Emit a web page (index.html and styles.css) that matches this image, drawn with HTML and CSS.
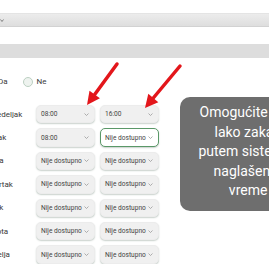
FILE: index.html
```html
<!DOCTYPE html>
<html lang="sr">
<head>
    <meta charset="UTF-8">
    <meta name="viewport" content="width=device-width, initial-scale=1.0">
    <title>Radno vreme</title>
    <link rel="stylesheet" href="styles.css">
</head>
<body>
    <div class="page">
        <div class="bar bar-top">
            <svg class="bar-chev" width="4" height="3" viewBox="0 0 4 3"><polyline points="0.5,0.5 2,2.5 3.5,0.5" fill="none" stroke="#777" stroke-width="0.9"/></svg>
        </div>
        <div class="bar bar-plain"></div>

        <div class="radios">
            <label class="radio-item"><span class="radio"></span>Da</label>
            <label class="radio-item"><span class="radio"></span>Ne</label>
        </div>

        <div class="days" id="days">
            <!-- rows are filled in below -->
        </div>
    </div>

    <svg class="arrows" width="269" height="270" viewBox="0 0 269 270">
        <line x1="117" y1="64" x2="94.7" y2="94.5" stroke="#e3161b" stroke-width="3.5" stroke-linecap="round"/>
        <polygon points="87,105 99.9,98.3 89.5,90.7" fill="#e3161b"/>
        <line x1="180" y1="66" x2="153.3" y2="98" stroke="#e3161b" stroke-width="3.5" stroke-linecap="round"/>
        <polygon points="145,108 158.3,102.2 148.3,93.8" fill="#e3161b"/>
    </svg>

    <div class="tip">
        <span>Omogućite klijentima</span>
        <span>lako zakazivanje</span>
        <span>putem sistema online</span>
        <span>naglašeno radno</span>
        <span>vreme rada.</span>
    </div>

    <script>
        const days = [
            {name: "Ponedeljak", from: "08:00", to: "16:00"},
            {name: "Utorak", from: "08:00", to: "Nije dostupno", focus: true},
            {name: "Sreda", from: "Nije dostupno", to: "Nije dostupno"},
            {name: "Četvrtak", from: "Nije dostupno", to: "Nije dostupno"},
            {name: "Petak", from: "Nije dostupno", to: "Nije dostupno"},
            {name: "Subota", from: "Nije dostupno", to: "Nije dostupno"},
            {name: "Nedelja", from: "Nije dostupno", to: "Nije dostupno"}
        ];

        const chevron = '<svg class="chev" width="5" height="3" viewBox="0 0 5 3"><polyline points="0.5,0.5 2.5,2.5 4.5,0.5" fill="none" stroke="#9a9a9a" stroke-width="0.8"/></svg>';

        const list = document.getElementById('days');
        days.forEach(day => {
            const row = document.createElement('div');
            row.className = 'day-row';
            row.innerHTML = `<span class="day">${day.name}</span>
                <div class="select"><span class="value">${day.from}</span>${chevron}</div>
                <div class="select${day.focus ? ' focused' : ''}"><span class="value">${day.to}</span>${chevron}</div>`;
            list.appendChild(row);
        });
    </script>
</body>
</html>
```

FILE: styles.css
```css
body {
    font-family: Roboto, "Liberation Sans", sans-serif;
    margin: 0;
    background-color: #ffffff;
    color: #3a3a3a;
    overflow: hidden;
}
.page {
    margin-left: -16px;
    padding-top: 13px;
}
.bar {
    height: 14px;
    box-sizing: border-box;
}
.bar-top {
    background: linear-gradient(#ececec, #dedede);
    border-top: 1px solid #e4e4e4;
    border-bottom: 1px solid #d2d2d2;
    display: flex;
    align-items: center;
    padding-left: 16px;
}
.bar-plain {
    margin-top: 17px;
    background-color: #dddddd;
}
.radios {
    margin-top: 18px;
    display: flex;
    gap: 15px;
    height: 11px;
    align-items: center;
    font-size: 8px;
}
.radio-item {
    display: flex;
    align-items: center;
    gap: 4px;
}
.radio {
    width: 10px;
    height: 10px;
    box-sizing: border-box;
    border-radius: 50%;
    border: 1px solid #bcd0c2;
    background-color: #eef3ef;
}
.days {
    margin-top: 18px;
    margin-left: -1px;
    display: flex;
    flex-direction: column;
    gap: 5px;
}
.day-row {
    display: grid;
    grid-template-columns: 48px 59px 59px;
    column-gap: 5px;
    align-items: center;
    height: 18.4px;
}
.day {
    font-size: 8px;
    color: #3a3a3a;
    white-space: nowrap;
}
.select {
    height: 100%;
    box-sizing: border-box;
    display: flex;
    align-items: center;
    justify-content: space-between;
    padding: 0 5px 0 4px;
    border: 1px solid #ececec;
    border-radius: 5px;
    background-color: #f0f0f0;
    box-shadow: 0 1px 1.5px rgba(40, 70, 50, 0.25);
    font-size: 6.6px;
    color: #444;
    white-space: nowrap;
}
.select .chev {
    flex-shrink: 0;
}
.select.focused {
    background-color: #ffffff;
    border-color: #5a9868;
}
.arrows {
    position: absolute;
    top: 0;
    left: 0;
    pointer-events: none;
    z-index: 2;
}
.tip {
    position: absolute;
    top: 97px;
    left: 180px;
    width: 171px;
    height: 114px;
    box-sizing: border-box;
    padding-top: 6px;
    border-radius: 10px;
    background-color: #6e6e6e;
    color: #ffffff;
    font-size: 14px;
    line-height: 19.6px;
    text-align: center;
    display: flex;
    flex-direction: column;
}
```
